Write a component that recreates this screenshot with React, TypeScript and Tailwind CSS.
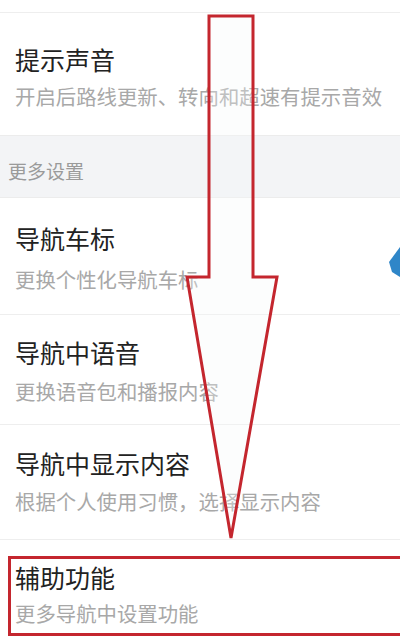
const font = { fontFamily: '"Noto Sans CJK SC", "Noto Sans", sans-serif' };

interface RowProps {
  title: string;
  desc: string;
  pad: string;
  gap: string;
  height: string;
  last?: boolean;
}

function SettingRow({ title, desc, pad, gap, height, last }: RowProps) {
  return (
    <div className={`flex flex-col bg-white pl-[15px] ${pad} ${height} ${last ? '' : 'border-b border-[#eeeeee]'}`}>
      <div className="text-[25px] leading-[32px] text-[#222222]">{title}</div>
      <div className={`text-[20.4px] leading-[28px] text-[#a8a8a8] whitespace-nowrap ${gap}`}>{desc}</div>
    </div>
  );
}

export default function App() {
  return (
    <div className="relative w-[400px] h-[642px] overflow-hidden bg-white" style={font}>
      <div className="h-[13px] border-b border-[#eeeeee]" />
      <SettingRow title="提示声音" desc="开启后路线更新、转向和超速有提示音效" pad="pt-[30px]" gap="mt-[7px]" height="h-[122px]" last />
      <div className="h-[63px] bg-[#f3f4f6] pl-[8px] pt-[21px] text-[19px] leading-[28px] text-[#9a9a9a] border-y border-[#ececec]">
        更多设置
      </div>
      <SettingRow title="导航车标" desc="更换个性化导航车标" pad="pt-[24px]" gap="mt-[11px]" height="h-[117px]" />
      <SettingRow title="导航中语音" desc="更换语音包和播报内容" pad="pt-[21px]" gap="mt-[9px]" height="h-[110px]" />
      <SettingRow title="导航中显示内容" desc="根据个人使用习惯，选择显示内容" pad="pt-[22px]" gap="mt-[8px]" height="h-[115px]" />
      <SettingRow title="辅助功能" desc="更多导航中设置功能" pad="pt-[21px]" gap="mt-[6px]" height="h-[102px]" last />

      {/* red highlight frame */}
      <div className="absolute left-[8px] top-[556px] w-[400px] h-[80px] border-[3px] border-[#c4262e]" />

      {/* arrow overlay */}
      <svg className="absolute left-0 top-0" width="400" height="642" viewBox="0 0 400 642">
        <polygon
          points="209,16 253,16 253,277 277,277 231,538 187,277 209,277"
          fill="#f4f7fa"
          fillOpacity="0.3"
          stroke="#c4262e"
          strokeWidth="3"
          strokeLinejoin="miter"
        />
        <polygon points="400,247 389,262 392,272 400,277" fill="#2f86c8" />
      </svg>
    </div>
  );
}
